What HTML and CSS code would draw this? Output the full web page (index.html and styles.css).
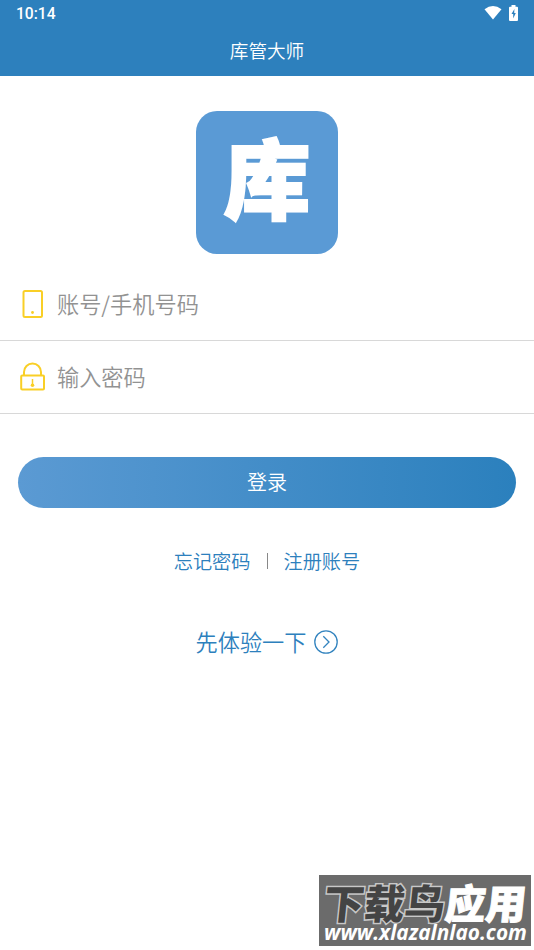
FILE: index.html
```html
<!DOCTYPE html>
<html lang="zh-CN">
<head>
    <meta charset="UTF-8">
    <meta name="viewport" content="width=device-width, initial-scale=1.0">
    <title>库管大师</title>
    <link rel="stylesheet" href="styles.css">
</head>
<body>
    <header class="header">
        <div class="status-bar">
            <span class="time">10:14</span>
            <div class="status-icons">
                <svg width="18" height="14" viewBox="0 0 18 14"><path d="M0.5 3.2Q9-3 17.5 3.2L9 13.6Z" fill="#fff"/></svg>
                <svg width="9" height="16" viewBox="0 0 9 16">
                    <path d="M2.5 0h4v1.7H8q1 0 1 1V15q0 1-1 1H1q-1 0-1-1V2.700q0-1 1-1h1.500z" fill="#fff"/>
                    <path d="M5.400 4L2.500 9h1.700v4.500L6.800 8H5.200z" fill="#2d80bd"/>
                </svg>
            </div>
        </div>
        <h1 class="title">库管大师</h1>
    </header>
    <main>
        <div class="logo"><span class="logo-text">库</span></div>
        <form class="login-form">
            <label class="field">
                <svg class="field-icon" width="26" height="30" viewBox="0 0 26 30" fill="none" stroke="#f9cf26" stroke-width="2">
                    <rect x="4.500" y="2" width="18.500" height="26" rx="1.500"/>
                    <circle cx="13.500" cy="23.500" r="1.400" fill="#f9cf26" stroke="none"/>
                </svg>
                <input class="field-input" type="text" placeholder="账号/手机号码">
            </label>
            <label class="field">
                <svg class="field-icon" width="26" height="30" viewBox="0 0 26 30" fill="none" stroke="#f9cf26" stroke-width="2">
                    <rect x="2.200" y="13.500" width="22.800" height="14" rx="1"/>
                    <path d="M5 13.500V10a8.500 8.500 0 0 1 17 0v3.500"/>
                    <path d="M13.500 17v6" stroke-width="1.500"/>
                    <circle cx="13.500" cy="23.300" r="1.800" fill="#f9cf26" stroke="none"/>
                </svg>
                <input class="field-input" type="password" placeholder="输入密码">
            </label>
            <button class="login-button" type="button">登录</button>
        </form>
        <div class="links">
            <a class="link">忘记密码</a>
            <span class="divider"></span>
            <a class="link">注册账号</a>
        </div>
        <a class="trial">
            <span class="trial-text">先体验一下</span>
            <svg width="24" height="24" viewBox="0 0 24 24" fill="none" stroke="#3384bf" stroke-width="1.300">
                <circle cx="12" cy="12" r="11.200"/>
                <path d="M9.300 6.300l5.700 5.700-5.700 5.700"/>
            </svg>
        </a>
    </main>
    <div class="watermark">
        <div class="mark-name"><span class="mark-dark">下载鸟</span><span class="mark-light">应用</span></div>
        <div class="mark-url">www.xlazalnlao.com</div>
    </div>
</body>
</html>
```

FILE: styles.css
```css
* {
    box-sizing: border-box;
}
body {
    margin: 0;
    height: 950px;
    overflow: hidden;
    position: relative;
    background: #fff;
    font-family: "Noto Sans CJK SC", sans-serif;
}
svg {
    display: block;
    flex-shrink: 0;
}
.header {
    height: 76px;
    background: #2d80bd;
    color: #fff;
}
.status-bar {
    height: 28px;
    padding: 0 16px 0 16px;
    display: flex;
    justify-content: space-between;
    align-items: center;
}
.time {
    font: 500 15.6px/28px Roboto, sans-serif;
}
.status-icons {
    display: flex;
    align-items: center;
    gap: 7px;
    padding-bottom: 3px;
}
.title {
    margin: 0;
    text-align: center;
    font-size: 18.6px;
    line-height: 44px;
    font-weight: 350;
}
.logo {
    width: 142px;
    height: 143px;
    margin: 35px auto 14px;
    padding-bottom: 14px;
    border-radius: 21px;
    background: #5a9ad5;
    color: #fff;
    display: flex;
    justify-content: center;
    align-items: center;
}
.logo-text {
    font-size: 87px;
    line-height: 1;
    font-weight: 900;
    -webkit-text-stroke: 2px #fff;
}
.field {
    height: 73px;
    padding-left: 19px;
    display: flex;
    align-items: center;
    gap: 12px;
    border-bottom: 1px solid #d8d8d8;
}
.field-input {
    flex: 1;
    min-width: 0;
    height: 40px;
    padding: 0 0 3px;
    border: none;
    outline: none;
    background: none;
    font-family: inherit;
    font-size: 22.2px;
    font-weight: 350;
}
.field-input::placeholder {
    color: #929292;
}
.login-button {
    display: block;
    width: 498px;
    height: 51px;
    margin: 43px auto 0;
    padding: 0 0 2px;
    border: none;
    border-radius: 26px;
    background: linear-gradient(to right, #5b9ad3, #2b80bd);
    color: #fff;
    font-family: inherit;
    font-size: 20px;
    font-weight: 350;
}
.links {
    height: 30px;
    margin-top: 38px;
    display: flex;
    justify-content: center;
    align-items: center;
    gap: 16px;
    color: #2d80bd;
    font-size: 19.2px;
    font-weight: 350;
}
.link {
    padding-bottom: 1px;
}
.divider {
    width: 1px;
    height: 16px;
    background: #888;
}
.trial {
    height: 34px;
    margin-top: 49px;
    display: flex;
    justify-content: center;
    align-items: center;
    gap: 8px;
    color: #2d80bd;
    font-size: 22.2px;
    font-weight: 350;
}
.trial-text {
    padding-bottom: 2px;
}
.watermark {
    position: absolute;
    right: 3px;
    bottom: 4px;
    width: 212px;
    height: 71px;
    padding: 8px 4px 0 5px;
    background: #6b6b6b;
    white-space: nowrap;
}
.mark-name {
    display: flex;
    font-size: 40.5px;
    line-height: 38px;
    font-weight: 900;
    transform: skewX(-6deg);
}
.mark-dark {
    color: #444;
    -webkit-text-stroke: 3px #c8c8c8;
    paint-order: stroke fill;
}
.mark-light {
    color: #fff;
    -webkit-text-stroke: 1px #fff;
}
.mark-url {
    color: #fff;
    font: italic 700 20.8px/22px "Open Sans", sans-serif;
}
```
